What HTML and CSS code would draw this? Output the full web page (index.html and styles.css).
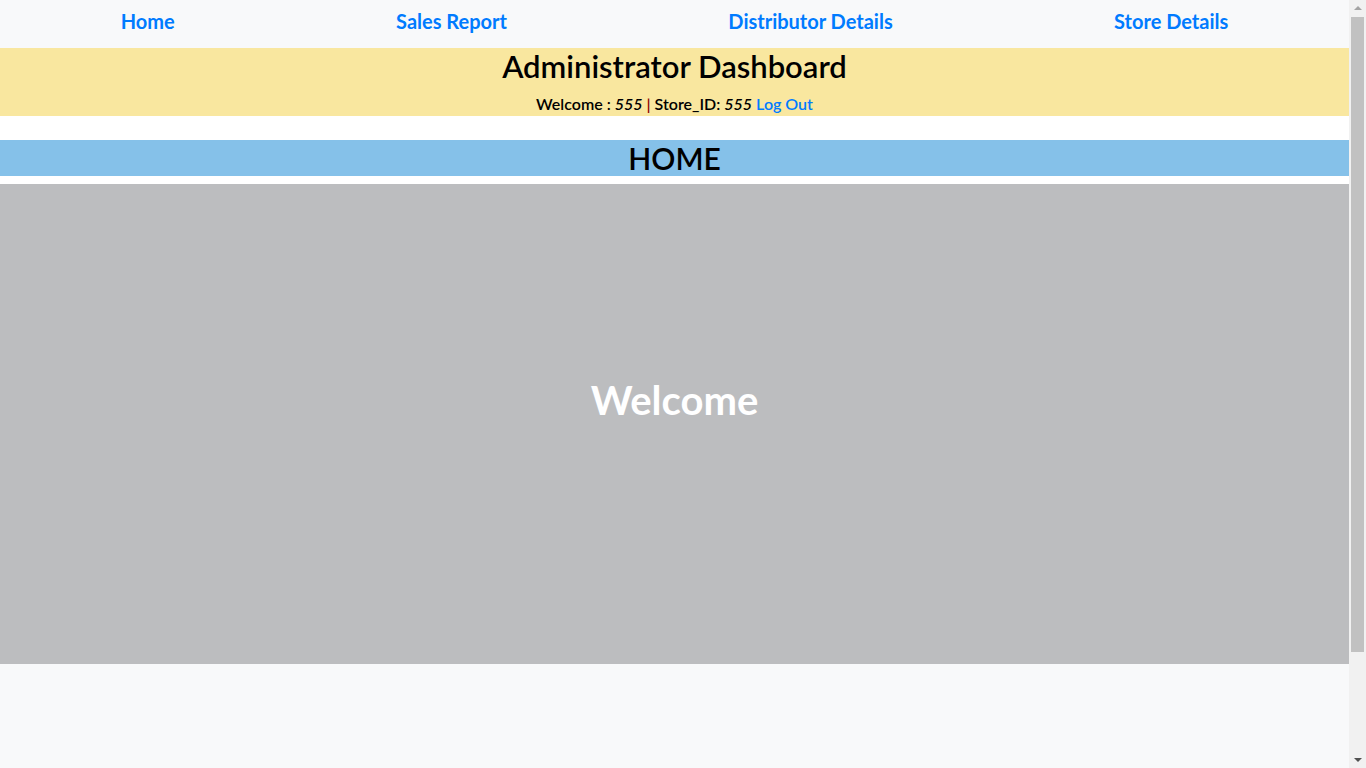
FILE: index.html
```html
<!DOCTYPE html>
<html lang="en">
<head>
<meta charset="utf-8">
<title>Administrator Dashboard</title>
<link rel="stylesheet" href="styles.css">
</head>
<body>
<div class="page">
  <nav class="topnav">
    <a class="nav-link" href="#">Home</a>
    <a class="nav-link" href="#">Sales Report</a>
    <a class="nav-link" href="#">Distributor Details</a>
    <a class="nav-link" href="#">Store Details</a>
  </nav>
  <header class="banner">
    <h1 class="banner-title">Administrator Dashboard</h1>
    <p class="banner-info">Welcome : <em>555</em> <span class="sep">|</span> Store_ID: <em>555</em> <a class="logout" href="#">Log Out</a></p>
  </header>
  <section class="section-head">
    <h2 class="section-title">HOME</h2>
  </section>
  <main class="hero">
    <h3 class="hero-text">Welcome</h3>
  </main>
  <footer class="page-foot"></footer>
</div>
<div class="scrollbar" aria-hidden="true">
  <span class="arrow arrow-up"></span>
  <span class="thumb"></span>
  <span class="arrow arrow-down"></span>
</div>
</body>
</html>
```
FILE: styles.css
```css
html, body {
  margin: 0;
  padding: 0;
}
body {
  background: #ffffff;
  font-family: Lato, "Open Sans", sans-serif;
  color: #000;
}
.page {
  margin-right: 17px;
}
.topnav {
  height: 48px;
  background: #f8f9fa;
  display: flex;
  justify-content: space-around;
  align-items: center;
  padding: 0 10px;
  box-sizing: border-box;
}
.nav-link {
  color: #007bff;
  text-decoration: none;
  font-size: 20px;
  font-weight: 700;
  line-height: 24px;
  margin-top: -7px;
}
.banner {
  background: #f9e79f;
  height: 68px;
  text-align: center;
  margin-bottom: 24px;
}
.banner-title {
  margin: 0 0 7px;
  font-size: 31px;
  font-weight: 600;
  line-height: 37px;
}
.banner-info {
  margin: 0;
  font-size: 16px;
  font-weight: 600;
  line-height: 24px;
}
.sep {
  color: #8b0000;
}
.logout {
  color: #007bff;
  text-decoration: none;
}
.section-head {
  background: #85c1e9;
  height: 36px;
  margin-bottom: 8px;
  text-align: center;
}
.section-title {
  margin: 0;
  font-size: 30px;
  font-weight: 600;
  line-height: 36px;
}
.hero {
  background: #bcbdbf;
  height: 480px;
  display: flex;
  justify-content: center;
  align-items: center;
  padding-bottom: 48px;
  box-sizing: border-box;
}
.hero-text {
  margin: 0;
  color: #fff;
  font-size: 40px;
  font-weight: 700;
  line-height: 48px;
}
.page-foot {
  background: #f8f9fa;
  height: 216px;
}
.scrollbar {
  position: fixed;
  top: 0;
  right: 0;
  width: 17px;
  height: 100vh;
  background: #f1f1f1;
  display: flex;
  flex-direction: column;
  align-items: center;
}
.arrow {
  width: 0;
  height: 0;
  border-left: 4px solid transparent;
  border-right: 4px solid transparent;
  flex: none;
}
.arrow-up {
  border-bottom: 4px solid #a3a3a3;
  margin: 6px 0 7px;
}
.thumb {
  width: 13px;
  height: 635px;
  background: #c1c1c1;
  flex: none;
}
.arrow-down {
  border-top: 4px solid #505050;
  margin-top: auto;
  margin-bottom: 6px;
}
```
